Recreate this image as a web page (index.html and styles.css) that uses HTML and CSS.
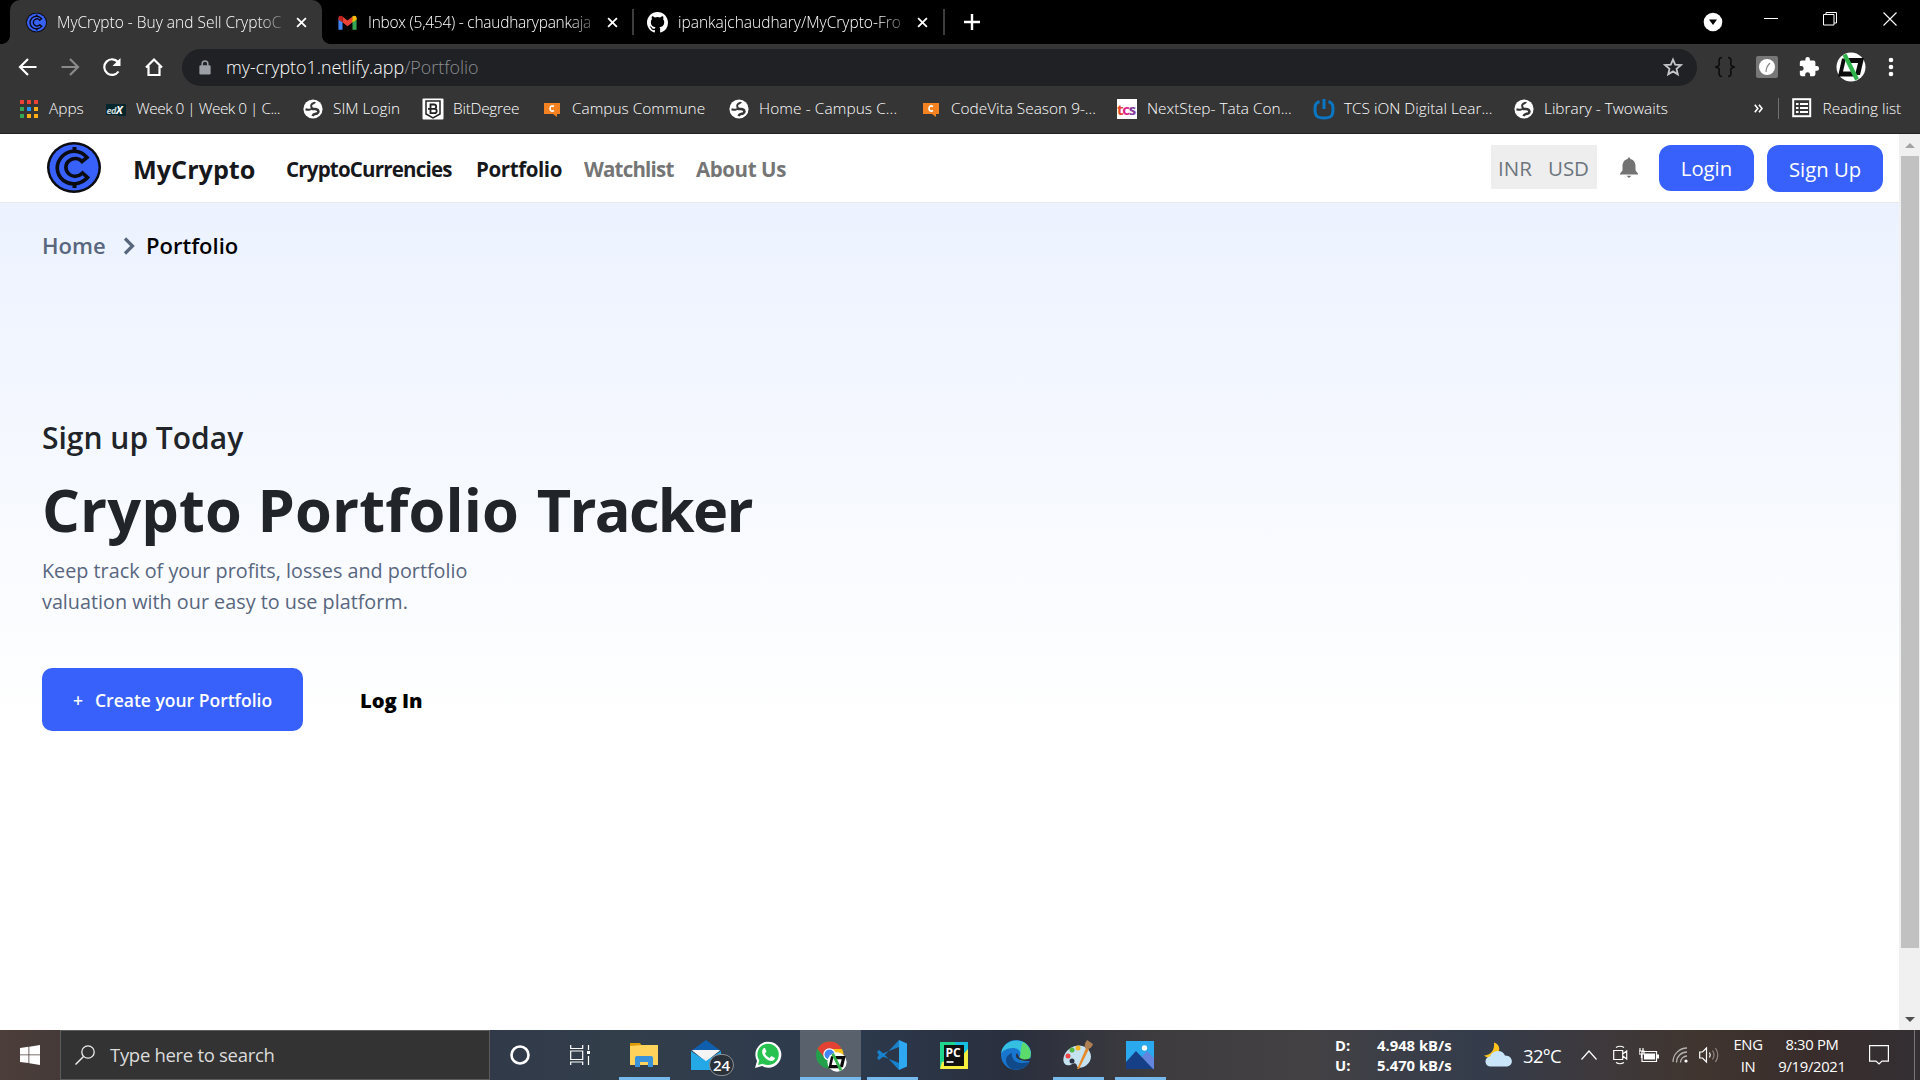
FILE: index.html
```html
<!DOCTYPE html>
<html lang="en">
<head>
<meta charset="utf-8">
<title>MyCrypto - Buy and Sell CryptoCurrencies</title>
<link rel="stylesheet" href="styles.css">
</head>
<body>
<svg class="defs" width="0" height="0" aria-hidden="true">
  <defs>
    <symbol id="coin" viewBox="0 0 54 51">
      <ellipse cx="27" cy="25.500" rx="27" ry="25.500" fill="#0b0b12"/>
      <ellipse cx="27" cy="25.500" rx="24.500" ry="23" fill="#3861fb"/>
      <g fill="none" stroke="#0b0b12" stroke-width="3.600">
        <path d="M27.500 5v5M27.500 41v5" stroke-width="4"/>
        <path d="M40 15.500C33 7 22 8 16 13.500C8 21 8.500 32 16.500 38.500C23 43.500 34 43 40.500 35.500L35.500 31C31.500 35 26 35.500 22 32C17.500 28 18 21.500 22.500 18.500C26.500 15.500 32 16 35 19.500Z"/>
      </g>
    </symbol>
    <symbol id="globe" viewBox="0 0 20 20">
      <circle cx="10" cy="10" r="9.600" fill="#fff"/>
      <path d="M2.500 10.200C5 11 8 10.800 8.500 9.500C9 8 7.500 7 8.500 5.500C9.500 4 11.500 4.500 12 3" fill="none" stroke="#353535" stroke-width="2"/>
      <path d="M8.500 9.500c2 1 3 .2 5 .7c2.500.8 2.500 3.500.5 4.300c-2 .6-3.500.3-4.500 2.500" fill="none" stroke="#353535" stroke-width="2.600"/>
    </symbol>
    <symbol id="speech" viewBox="0 0 18 18">
      <path d="M1 3h16v11h-3v3l-4-3H1z" fill="#f58220"/>
      <path d="M11 6.500C8.500 5 7 6.500 7 8.500s1.500 3.500 4 2" fill="none" stroke="#fff" stroke-width="1.600"/>
    </symbol>
    <symbol id="close" viewBox="0 0 12 12"><path d="M1.200 1.200l9.600 9.600M10.800 1.200L1.200 10.800" stroke="#fff" stroke-width="2"/></symbol>
    <symbol id="avatar" viewBox="0 0 30 30">
      <circle cx="15" cy="15" r="14.500" fill="#fff"/>
      <path d="M12 6h16l-4 17h-5l3-12h-8zM6 6.500h4l-3 13h9l3 5H2z" fill="#0c0c0c"/>
      <path d="M8.500 2.500L21 27.500" stroke="#2fb34a" stroke-width="4.200"/>
    </symbol>
  </defs>
</svg>

<div class="browser">
  <div class="tabstrip">
    <div class="tab tab-active">
      <svg class="tab-icon" viewBox="0 0 54 51"><use href="#coin"/></svg>
      <span class="tab-title t1">MyCrypto - Buy and Sell CryptoC</span>
      <svg class="tab-close"><use href="#close"/></svg>
    </div>
    <div class="tab tab-mail">
      <svg class="tab-icon" viewBox="0 0 22 22"><path d="M1.500 5.500v13h4.300V10z" fill="#4285f4"/><path d="M16.200 9v9.500h4.300V5.500z" fill="#34a853"/><path d="M16 5l-5 4-5-4v6l5 4 5-4z" fill="#ea4335"/><path d="M1.500 6.500c0-3 2.500-3.300 4.500-1.800V11L1.500 8z" fill="#c5221f"/><path d="M20.500 6.500c0-3-2.500-3.300-4.500-1.800V11l4.500-3z" fill="#fbbc04"/></svg>
      <span class="tab-title t2">Inbox (5,454) - chaudharypankaja</span>
      <svg class="tab-close"><use href="#close"/></svg>
    </div>
    <div class="tab tab-git">
      <svg class="tab-icon" viewBox="0 0 16 16"><path fill="#fff" d="M8 0C3.580 0 0 3.580 0 8c0 3.540 2.290 6.530 5.470 7.590.4.070.55-.17.55-.38 0-.19-.01-.82-.01-1.490-2.010.37-2.530-.49-2.690-.94-.09-.23-.48-.94-.82-1.130-.28-.15-.68-.52-.01-.53.63-.01 1.080.58 1.230.82.72 1.210 1.870.87 2.330.66.07-.52.28-.87.51-1.070-1.780-.2-3.640-.89-3.640-3.950 0-.87.31-1.590.82-2.150-.08-.2-.36-1.020.08-2.120 0 0 .67-.21 2.200.82a7.600 7.600 0 0 1 4 0c1.530-1.040 2.200-.82 2.200-.82.44 1.100.16 1.920.08 2.120.51.56.82 1.270.82 2.150 0 3.070-1.870 3.750-3.650 3.950.29.25.54.73.54 1.480 0 1.070-.01 1.930-.01 2.200 0 .21.15.46.55.38A8 8 0 0 0 16 8c0-4.420-3.580-8-8-8z"/></svg>
      <span class="tab-title t3">ipankajchaudhary/MyCrypto-Fro</span>
      <svg class="tab-close"><use href="#close"/></svg>
    </div>
    <svg class="new-tab" viewBox="0 0 16 16"><path d="M8 0v16M0 8h16" stroke="#fff" stroke-width="2.400"/></svg>
    <div class="window-controls">
      <svg width="20" height="20" viewBox="0 0 20 20"><circle cx="10" cy="10" r="9.300" fill="#fff"/><path d="M6 7.500h8L10 13z" fill="#000"/></svg>
      <svg class="wc" viewBox="0 0 14 14"><path d="M0 6.500h14" stroke="#fff"/></svg>
      <svg class="wc" viewBox="0 0 14 14"><path d="M.5 2.500h10.500v10.500H.5zM3 2.500V.5h10.500V11H11" stroke="#fff" fill="none"/></svg>
      <svg class="wc" viewBox="0 0 14 14"><path d="M.5.5l13 13M13.500.5l-13 13" stroke="#fff" stroke-width="1.100"/></svg>
    </div>
  </div>

  <div class="toolbar">
    <svg class="tool" viewBox="0 0 22 22"><path d="M19.500 11H4M11 3l-8 8 8 8" class="ln"/></svg>
    <svg class="tool dim" viewBox="0 0 22 22"><path d="M2.500 11H18M11 3l8 8-8 8" class="ln"/></svg>
    <svg class="tool" viewBox="0 0 22 22"><path d="M17.500 15.500A7.800 7.800 0 1 1 17 6" class="ln"/><path d="M19.500 2v8h-8z" fill="#fff"/></svg>
    <svg class="tool" viewBox="0 0 22 22"><path d="M3 11.500L11 3.500l8 8M5.500 10v9h11v-9" class="ln"/></svg>
    <div class="omnibox">
      <svg class="lock" viewBox="0 0 12 16"><rect y="5.500" width="12" height="10" rx="1.500" fill="#9aa0a6"/><path d="M3 6V4a3 3 0 0 1 6 0v2" fill="none" stroke="#9aa0a6" stroke-width="1.600"/></svg>
      <span class="url">my-crypto1.netlify.app<span class="path">/Portfolio</span></span>
      <svg class="star" viewBox="0 0 20 20"><path d="M10 2.500l2.200 5.200 5.600.4-4.300 3.700 1.300 5.500-4.800-2.900-4.800 2.900 1.300-5.500L2.200 8.100l5.600-.4z" fill="none" stroke="#c4c7c9" stroke-width="1.800"/></svg>
    </div>
    <div class="extensions">
      <svg width="22" height="22" viewBox="0 0 22 22"><path d="M8 1.500C3 1.500 6 8 5 9.500L2 11l3 1.500C6 14 3 20.500 8 20.500M14 1.500c5 0 2 6.500 3 8l3 1.500-3 1.500c-1 1.500 2 8-3 8" fill="none" stroke="#0b0b0b" stroke-width="1.500"/></svg>
      <svg width="22" height="22" viewBox="0 0 22 22"><rect width="22" height="22" rx="2" fill="#777"/><circle cx="11" cy="11" r="8" fill="#fff"/><path d="M10 16c0-4 1-6 4-9" stroke="#888" fill="none" stroke-width="1.200"/></svg>
      <svg width="22" height="22" viewBox="0 0 24 24"><path fill="#fff" d="M20.500 11H19V7a2 2 0 0 0-2-2h-4V3.500a2.500 2.500 0 0 0-5 0V5H4a2 2 0 0 0-2 2v3.800h1.500a2.700 2.700 0 0 1 0 5.400H2V20a2 2 0 0 0 2 2h3.800v-1.500a2.700 2.700 0 0 1 5.400 0V22H17a2 2 0 0 0 2-2v-4h1.500a2.500 2.500 0 0 0 0-5z"/></svg>
      <svg width="30" height="30"><use href="#avatar"/></svg>
      <svg width="6" height="20" viewBox="0 0 6 20"><circle cx="3" cy="3" r="2.300" fill="#fff"/><circle cx="3" cy="10" r="2.300" fill="#fff"/><circle cx="3" cy="17" r="2.300" fill="#fff"/></svg>
    </div>
  </div>

  <div class="bookmarks">
    <div class="bm"><svg viewBox="0 0 24 24"><path d="M3 3h4v4H3zM10 3h4v4h-4zM17 3h4v4h-4z" fill="#ea4335"/><path d="M3 10h4v4H3zM3 17h4v4H3z" fill="#34a853"/><path d="M10 10h4v4h-4z" fill="#2196f3"/><path d="M17 10h4v4h-4zM10 17h4v4h-4zM17 17h4v4h-4z" fill="#fbaf17"/></svg><span>Apps</span></div>
    <div class="bm"><svg viewBox="0 0 24 24"><path d="M2 7h20v12H14v-1H2z" fill="#02262b"/><text x="2.500" y="16.500" class="edx">ed<tspan class="edx-x">X</tspan></text></svg><span class="b2">Week 0 | Week 0 | C...</span></div>
    <div class="bm"><svg viewBox="-2 -2 24 24"><use href="#globe" width="20" height="20"/></svg><span>SIM Login</span></div>
    <div class="bm"><svg viewBox="0 0 24 24"><rect x="1.500" y="1.500" width="21" height="21" rx="1" fill="#fff"/><path d="M5 4h14v13l-7 4-7-4z" fill="none" stroke="#222" stroke-width="1.500"/><path d="M9.500 7.500h3.500a2 2 0 0 1 0 4.300H9.500zM9.500 11.800h4a2 2 0 0 1 0 4.400h-4zM7 11.800h3" fill="none" stroke="#222" stroke-width="1.800"/></svg><span class="b4">BitDegree</span></div>
    <div class="bm"><svg viewBox="-3 -3 24 24"><use href="#speech" width="18" height="18"/></svg><span>Campus Commune</span></div>
    <div class="bm"><svg viewBox="-2 -2 24 24"><use href="#globe" width="20" height="20"/></svg><span class="b6">Home - Campus C...</span></div>
    <div class="bm"><svg viewBox="-3 -3 24 24"><use href="#speech" width="18" height="18"/></svg><span>CodeVita Season 9-...</span></div>
    <div class="bm"><svg viewBox="0 0 24 24"><rect x="2" y="2" width="20" height="20" fill="#fff"/><text x="2" y="18" class="tcs"><tspan fill="#e8452f">t</tspan><tspan fill="#e0258a">c</tspan><tspan fill="#8a3a9c">s</tspan></text></svg><span>NextStep- Tata Con...</span></div>
    <div class="bm"><svg viewBox="0 0 24 24"><path d="M7.500 4.500C3 6 3 9 3 13c0 6 2 8 9 8s9-2 9-8c0-4 0-7-4.500-8.500" fill="none" stroke="#0a76c4" stroke-width="3"/><path d="M12 2v10" stroke="#0a76c4" stroke-width="3"/></svg><span>TCS iON Digital Lear...</span></div>
    <div class="bm"><svg viewBox="-2 -2 24 24"><use href="#globe" width="20" height="20"/></svg><span>Library - Twowaits</span></div>
    <svg class="more" viewBox="0 0 9 9"><path d="M.8.8l3 3.700-3 3.700M5 .8l3 3.700-3 3.700" fill="none" stroke="#fff" stroke-width="1.600"/></svg>
    <div class="bm-divider"></div>
    <svg class="reading" viewBox="0 0 20 20"><rect x="1.200" y="1.200" width="17" height="17" fill="none" stroke="#fff" stroke-width="2"/><path d="M4 6h2.500M4 10h2.500M4 14h2.500M8 6h8M8 10h8M8 14h8" stroke="#fff" stroke-width="2"/></svg>
    <span class="reading-text">Reading list</span>
  </div>
</div>

<div class="viewport">
  <div class="page">
    <header class="nav">
      <svg class="logo" viewBox="0 0 54 51"><use href="#coin"/></svg>
      <span class="brand">MyCrypto</span>
      <nav class="links">
        <a class="l1">CryptoCurrencies</a><a class="l2">Portfolio</a><a class="l3 muted">Watchlist</a><a class="l4 muted">About Us</a>
      </nav>
      <div class="currency"><span>INR</span><span>USD</span></div>
      <svg class="bell" viewBox="0 0 18 21"><path d="M9 0l1.500 2C14 3 15.500 6 15.500 9v4.500L18 16.500v1H0v-1l2.500-3V9c0-3 1.500-6 5-7zM6.500 18.700h5L9 21z" fill="#737373"/></svg>
      <button class="btn login">Login</button>
      <button class="btn signup">Sign Up</button>
    </header>
    <main class="hero">
      <div class="crumbs"><span class="home">Home</span><svg viewBox="0 0 12 18"><path d="M2 1.500L9.500 9 2 16.500" fill="none" stroke="#58667e" stroke-width="3.200"/></svg><span class="here">Portfolio</span></div>
      <h3>Sign up Today</h3>
      <h1>Crypto Portfolio <span class="tracker">Tracker</span></h1>
      <p>Keep track of your profits, losses and portfolio<br>valuation with our easy to use platform.</p>
      <div class="actions">
        <button class="create"><span class="plus">+</span><span>Create your Portfolio</span></button>
        <span class="log-in">Log In</span>
      </div>
    </main>
  </div>
  <div class="scrollbar">
    <svg viewBox="0 0 10 5"><path d="M0 5l5-5 5 5z" fill="#a3a3a3"/></svg>
    <div class="thumb"></div>
    <svg viewBox="0 0 10 5"><path d="M0 0l5 5 5-5z" fill="#505050"/></svg>
  </div>
</div>

<footer class="taskbar">
  <div class="start"><svg width="20" height="20" viewBox="0 0 20 20"><path d="M0 3l8.500-1.200v7.700H0zM9.300 1.700L20 0v9.500H9.300zM0 10.300h8.500V18L0 17zM9.300 10.300H20V20L9.300 18.300z" fill="#fff"/></svg></div>
  <div class="search"><svg width="20" height="20" viewBox="0 0 20 20"><circle cx="13" cy="7" r="6.200" fill="none" stroke="#eee" stroke-width="1.300"/><path d="M8.500 11.500L.5 19.500" stroke="#eee" stroke-width="1.500"/></svg><span>Type here to search</span></div>
  <div class="apps">
    <div class="small"><svg width="20" height="20" viewBox="0 0 20 20"><circle cx="10" cy="10" r="8.500" fill="none" stroke="#fff" stroke-width="2.600"/></svg></div>
    <div class="small"><svg width="20" height="20" viewBox="0 0 20 20"><path d="M.7 0v3.500h12V0M.7 6h12v8.500H.7zM.7 20v-3h12v3M18.500 0v5M18.500 11v9" fill="none" stroke="#fff" stroke-width="1.200"/><path d="M17 6h3v3h-3z" fill="#fff"/></svg></div>
    <div class="app run"><svg viewBox="0 0 30 30"><path d="M1 3h10l2 3H1z" fill="#dd9a08"/><path d="M1 6l12-1h16v20H1z" fill="#ffd35b"/><path d="M6 27v-9q0-2 2-2h14q2 0 2 2v9h-5v-5h-8v5z" fill="#3a92da"/></svg></div>
    <div class="app"><svg viewBox="0 0 30 30"><path d="M0 11L15 0l15 11z" fill="#0f5fae"/><path d="M1 10h28L15 22z" fill="#f4f4f4"/><path d="M0 11l15 10 15-10v19H0z" fill="#25a8e6"/><path d="M1 10.500h28L15 20z" fill="#f4f4f4"/></svg><span class="badge">24</span></div>
    <div class="app"><svg viewBox="0 0 30 30"><path d="M2 28l2-7A13 13 0 1 1 9 26z" fill="#fff"/><path d="M5 25l1.300-4.500a10.700 10.700 0 1 1 3.500 3.200z" fill="#27c250"/><path d="M11 8c-4 3-1 9 4 12 4 2 6 1 7-2l-3.500-2-2 2c-2-1-4-3-4.500-4.500l1.500-2L12 8z" fill="#fff"/></svg></div>
    <div class="app run current"><svg viewBox="0 0 30 30"><circle cx="14.500" cy="15" r="13.500" fill="#22a04b"/><path d="M2.500 9A13.500 13.500 0 0 1 27 9.500H14.500L9 17z" fill="#e34133"/><path d="M14.500 9H27A13.500 13.500 0 0 1 14 28.500L20 17z" fill="#fbc116"/><circle cx="14.500" cy="14.500" r="6.200" fill="#fff"/><circle cx="14.500" cy="14.500" r="5" fill="#4285f4"/></svg><svg class="mini-avatar" viewBox="0 0 30 30"><use href="#avatar"/></svg></div>
    <div class="app run"><svg viewBox="0 0 30 30"><path d="M22 0L7 16l-5 4-2-2 2-3 20-8z" fill="#1b80c8"/><path d="M22 30L7 14l-5-4-2 2 2 3 20 8z" fill="#1583cf"/><path d="M22 0l8 3.500v23L22 30z" fill="#2fa8f2"/></svg></div>
    <div class="app"><svg viewBox="0 0 30 30"><path d="M1 2h17L9 28H1z" fill="#20d58e"/><path d="M16 2h13v10L18 17z" fill="#15bde0"/><path d="M29 9v20H1l2-7 18-4z" fill="#f5f03f"/><rect x="5" y="5" width="20" height="21" fill="#111"/><text x="6.500" y="16.500" class="pc">PC</text><path d="M7.500 22h7" stroke="#fff" stroke-width="1.700"/></svg></div>
    <div class="app"><svg viewBox="0 0 30 30"><circle cx="15" cy="15" r="15" fill="#1876cf"/><path d="M0 14C2-3 27-4 30 12c0 6-6 9-12 6 4-6-1-10-6-10C6 8 1 11 0 14z" fill="#35bfe0"/><path d="M22 2c7 4 9 12 7 16-4 4-9 3-11 1 3-6 1-13 4-17z" fill="#5bdb6c"/><path d="M11 13c-1 8 6 12 17 9-4 7-12 9-17 7C2 24 4 15 11 13z" fill="#114a8b"/><path d="M16 13c-3 3 0 9 13 8l1-3c-4 2-10 2-12-1z" fill="#2a3142"/></svg></div>
    <div class="app run"><svg viewBox="0 0 30 30"><path d="M24 8C16 2 4 7 1 16c-3 9 5 11 8 8 3-2 5 0 5 2 1 4 13 1 14-9 0-4-2-7-4-9z" fill="#c5e2f0"/><circle cx="5" cy="16" r="2.500" fill="#e44"/><circle cx="9" cy="10" r="2.500" fill="#56b945"/><circle cx="15" cy="8" r="2.500" fill="#f5b321"/><circle cx="9" cy="21" r="2.500" fill="#2a3142"/><path d="M23 8l3 1-10 20-2 0z" fill="#e58a2b"/><path d="M22 8c-1-4 1-6 2-8l6 4c-1 3-3 5-6 5z" fill="#b08055"/></svg></div>
    <div class="app run"><svg viewBox="0 0 30 30"><rect x="1" y="1" width="28" height="28" fill="#2aa9ee"/><path d="M14 20l8-9 7 7v11H14z" fill="#6485dd"/><path d="M1 22L11 11l17 18H1z" fill="#153f86"/><circle cx="19.500" cy="8" r="2.700" fill="#fff"/></svg></div>
  </div>
  <div class="net"><span>D:</span><span>4.948 kB/s</span><span>U:</span><span>5.470 kB/s</span></div>
  <svg class="weather" viewBox="0 0 28 24"><path d="M10 0c7 2 7 11 0 14-4 2-8 1-10-1 6 0 11-5 10-13z" fill="#ffc31c"/><path d="M7 24a5 5 0 0 1-1-10c2-6 12-8 15-1 9 0 9 11 1 11z" fill="#c9e5fa"/></svg>
  <span class="temp">32°C</span>
  <div class="tray">
    <svg class="i1" viewBox="0 0 16 10"><path d="M.5 9.500L8 1l7.500 8.500" class="tl"/></svg>
    <svg class="i2" viewBox="0 0 15 20"><path d="M3 2.500Q7 0 11 2.500M3 17.500Q7 20 11 17.500M.7 5.500h9v9h-9zM9.700 9l4-3v8l-4-3" class="tl"/></svg>
    <svg class="i3" viewBox="0 0 20 15"><path d="M3 3.500h14.500v10H3z" class="tl"/><path d="M5 5.500h11v6H5zM18 6.500h2v4h-2z" fill="#fff"/><path d="M1 0v3M4 0v3M0 3h5v3H0zM2.500 6v4" class="tl"/></svg>
    <svg class="i4" viewBox="0 0 16 16"><path d="M1 15A14 14 0 0 1 15 1M4.500 15.500A10.500 10.500 0 0 1 15 5M8.500 15.500A6.500 6.500 0 0 1 15 9" fill="none" stroke="#b5b2b1" stroke-width="1.300"/><circle cx="14" cy="14" r="1.600" fill="#fff"/></svg>
    <svg class="i5" viewBox="0 0 20 18"><path d="M.7 6h2.800L7.500 2v14L3.500 12H.7zM10.500 6.500q1.500 2.500 0 5" class="tl"/><path d="M13.500 4.500q3 4.500 0 9M16.500 2q4.500 7 0 14" fill="none" stroke="#8d8785" stroke-width="1.200"/></svg>
  </div>
  <div class="lang"><span>ENG</span><span>IN</span></div>
  <div class="clock"><span>8:30 PM</span><span class="date">9/19/2021</span></div>
  <svg class="note" viewBox="0 0 20 20"><path d="M.6.600h18.800v15.500h-6.400L10 19l-3-2.900H.6z" class="tl"/></svg>
  <div class="peek"></div>
</footer>
</body>
</html>
```
FILE: styles.css
```css
* { box-sizing: border-box; }
body {
  margin: 0;
  width: 1920px;
  height: 1080px;
  overflow: hidden;
  display: flex;
  flex-direction: column;
  font-family: "Open Sans", "Noto Sans", sans-serif;
  background: #fff;
}
svg { display: block; flex: none; }
.defs { position: absolute; }
span, a { white-space: nowrap; }
button { border: 0; font-family: inherit; white-space: nowrap; padding: 0; }

/* Browser chrome */
.browser { height: 134px; flex: none; background: #353535; border-bottom: 1px solid #222326; color: #fff; }
.tabstrip { height: 44px; background: #000; display: flex; align-items: center; padding-left: 10px; }
.tab { height: 44px; display: flex; align-items: center; font-size: 15.500px; font-weight: 300; }
.tab-active { width: 312px; background: #353535; border-radius: 10px 10px 0 0; padding-left: 16px; position: relative; }
.tab-active::before, .tab-active::after {
  content: ""; position: absolute; bottom: 0; width: 8px; height: 8px;
}
.tab-active::before { left: -8px; background: radial-gradient(circle at 0 0, #000 7.500px, #353535 8px); }
.tab-active::after { right: -8px; background: radial-gradient(circle at 100% 0, #000 7.500px, #353535 8px); }
.tab-mail { width: 312px; padding-left: 15px; }
.tab-git { width: 311px; padding-left: 13px; }
.tab-mail, .tab-git { background: linear-gradient(#3d3d3d, #3d3d3d) right center / 2px 26px no-repeat; }
.tab-icon { width: 21px; height: 21px; }
.tab-title {
  margin-left: 10px; width: 229px;
  -webkit-mask-image: linear-gradient(90deg, #000 200px, transparent 235px);
  mask-image: linear-gradient(90deg, #000 200px, transparent 235px);
}
.t2 { letter-spacing: -.25px; }
.tab-close { width: 11px; height: 11px; margin-left: 10px; }
.new-tab { width: 16px; height: 16px; margin-left: 19px; }
.window-controls { margin-left: auto; display: flex; align-items: center; padding-right: 23px; }
.wc { width: 14px; height: 14px; margin: -7px 0 0 45px; }
.wc:nth-child(2) { margin-left: 41px; }
.wc:last-child { margin-left: 46px; }

.toolbar { height: 46px; display: flex; align-items: center; padding-left: 17px; }
.tool { width: 22px; height: 22px; margin-right: 20px; }
.ln { fill: none; stroke: #fff; stroke-width: 2.200; }
.dim { opacity: .42; }
.omnibox { margin-left: -3px; width: 1515px; height: 37px; border-radius: 19px; background: #202124; display: flex; align-items: center; padding: 0 14px 0 17px; }
.lock { width: 12px; height: 15px; }
.url { margin-left: 15px; font-size: 17.900px; font-weight: 300; }
.path { color: #8d9094; }
.star { width: 20px; height: 20px; margin-left: auto; }
.extensions { display: flex; align-items: center; flex: 1; padding-left: 17px; }
.extensions svg { margin-right: 20px; }
.extensions svg:nth-child(3) { margin-right: 16px; }
.extensions svg:nth-child(4) { margin-right: 22px; }

.bookmarks { height: 38px; display: grid; grid-template-columns: 87px 197px 120px 119px 187px 192px 196px 197px 200px 242px 24px 14px 31px auto; align-items: center; padding: 0 0 2px 16.500px; font-size: 15.400px; font-weight: 300; }
.bm { display: flex; align-items: center; gap: 8.500px; }
.bm svg { width: 24px; height: 24px; margin-top: 2px; }
.b2 { letter-spacing: -.5px; }
.b4 { letter-spacing: -.25px; }
.b6 { letter-spacing: .1px; }
.edx { font: italic 700 9px "Open Sans", sans-serif; fill: #cfd8da; letter-spacing: -.4px; }
.edx-x { font-size: 11px; fill: #fff; }
.tcs { font: 700 15px "Open Sans", sans-serif; letter-spacing: -1.300px; }
.more { width: 9px; height: 9px; }
.bm-divider { width: 1px; height: 21px; background: #717171; }
.reading { width: 20px; height: 20px; }

/* Page */
.viewport { height: 896px; flex: none; display: flex; }
.page { width: 1899px; display: flex; flex-direction: column; }
.nav { height: 69px; flex: none; border-bottom: 1px solid #e6e8ec; display: flex; align-items: flex-start; padding: 0 16px 0 47px; background: #fff; }
.logo { width: 54px; height: 51px; margin-top: 8px; }
.brand { margin: 17px 0 0 32px; width: 153px; font-size: 25.200px; line-height: 36px; font-weight: 700; color: #17181b; }
.links { display: flex; font-size: 20.500px; line-height: 34px; margin-top: 18px; font-weight: 700; color: #17181b; letter-spacing: -.4px; }
.l1 { width: 190px; letter-spacing: -.8px; }
.l2 { width: 108px; }
.l3 { width: 112px; letter-spacing: -.8px; }
.muted { color: #757575; }
.currency { margin: 11px 23px 0 auto; width: 106px; height: 44px; background: #eee; display: flex; justify-content: space-between; padding: 0 8px 0 7px; font-size: 20.500px; line-height: 47px; color: #6c757d; }
.bell { width: 18px; height: 21px; margin: 23px 21px 0 0; }
.btn { background: #3861fb; color: #fff; font-size: 20.300px; margin-top: 11px; border-radius: 12px; }
.login { width: 95px; height: 46px; margin-right: 13px; }
.signup { width: 116px; height: 47px; padding-top: 1px; }

.hero { flex: 1; padding-left: 42px; background: linear-gradient(#ecf2ff, #fff 520px); }
.crumbs { display: flex; align-items: center; height: 36px; margin-top: 24px; font-size: 22px; font-weight: 600; }
.home { width: 81px; color: #58667e; }
.crumbs svg { width: 12px; height: 18px; margin: 2px 11px 0 0; }
.here { color: #000; }
h3 { margin: 150px 0 0; font-size: 30px; line-height: 50px; font-weight: 600; color: #212529; }
h1 { margin: 8px 0 0; font-size: 59.500px; line-height: 76px; font-weight: 700; color: #212529; white-space: nowrap; letter-spacing: .15px; }
.tracker { margin-left: 2px; letter-spacing: -1.700px; }
p { margin: 8px 0 0; font-size: 19.800px; line-height: 31px; color: #58667e; }
.actions { display: flex; align-items: center; margin-top: 51px; }
.create { width: 261px; height: 63px; border-radius: 10px; background: #3861fb; color: #fff; font-size: 17.500px; font-weight: 600; display: flex; align-items: center; padding: 1px 0 0 31px; gap: 12px; }
.log-in { margin-left: 57px; font-size: 20.200px; font-weight: 800; color: #000; }

.scrollbar { width: 21px; background: #f0f0f0; display: flex; flex-direction: column; align-items: center; }
.scrollbar svg { width: 10px; height: 5px; margin: 9px 0 8px; }
.thumb { width: 18px; height: 792px; background: #c1c1c1; margin-bottom: auto; }

/* Taskbar */
.taskbar {
  height: 50px; flex: none; display: flex; color: #fff;
  background: linear-gradient(90deg, #4b3e3b 0, #463a38 60px, #303a49 490px, #333e4b 620px, #2c3a4d 850px, #2a2f3e 1010px, #3e3c3e 1160px, #434144 1310px, #343c4b 1480px, #3e393c 1600px, #40352f 1700px, #392d2c 1810px, #332f33 1920px);
}
.start { width: 60px; display: flex; align-items: center; justify-content: center; }
.search { width: 430px; border: 1px solid #5c5c5c; background: #333; display: flex; align-items: center; padding: 0 0 1px 14px; gap: 15px; font-size: 18.500px; letter-spacing: -.3px; color: #dcdcdc; }
.apps { display: flex; }
.small { width: 60px; display: flex; align-items: center; justify-content: center; }
.app { width: 62px; display: flex; align-items: center; justify-content: center; position: relative; }
.app > svg { width: 30px; height: 30px; }
.small + .app { margin-left: 3px; }
.run { background: linear-gradient(#76b9ed, #76b9ed) center bottom / 51px 3px no-repeat; }
.current { background: linear-gradient(#76b9ed, #76b9ed) center bottom / 61px 3px no-repeat, linear-gradient(#59616c, #59616c) center / 61px 50px no-repeat; }
.badge { position: absolute; left: 34px; top: 24px; width: 25px; height: 22px; border: 1px solid #8b9096; border-radius: 11px; background: #2b3138; font-size: 15px; line-height: 20px; font-weight: 600; text-align: center; }
.app .mini-avatar { position: absolute; left: 28px; top: 22px; width: 20px; height: 20px; }
.pc { font: 700 12px "Open Sans", sans-serif; fill: #fff; }
.net { width: 149px; margin-left: 164px; display: grid; grid-template-columns: 42px auto; grid-template-rows: 20px 20px; align-content: center; line-height: 20px; font-size: 14.800px; font-weight: 700; }
.weather { width: 28px; height: 25px; margin-top: 12px; }
.temp { width: 58px; margin-left: 11px; font-size: 18.500px; line-height: 52px; letter-spacing: -.7px; }
.tray { display: flex; align-items: center; width: 153px; }
.tl { fill: none; stroke: #fff; stroke-width: 1.200; }
.i1 { width: 16px; height: 10px; margin-right: 16px; }
.i2 { width: 15px; height: 20px; margin-right: 11px; }
.i3 { width: 20px; height: 15px; margin-right: 13px; }
.i4 { width: 16px; height: 16px; margin-right: 11px; }
.i5 { width: 20px; height: 18px; }
.lang, .clock { display: flex; flex-direction: column; align-items: center; font-size: 14.800px; line-height: 22px; padding-top: 3px; letter-spacing: -.3px; }
.lang { width: 28px; }
.clock { width: 68px; margin-left: 16px; }
.note { width: 20px; height: 20px; margin: 15px 25px 0 23px; }
.peek { width: 1px; background: #777; }
```
